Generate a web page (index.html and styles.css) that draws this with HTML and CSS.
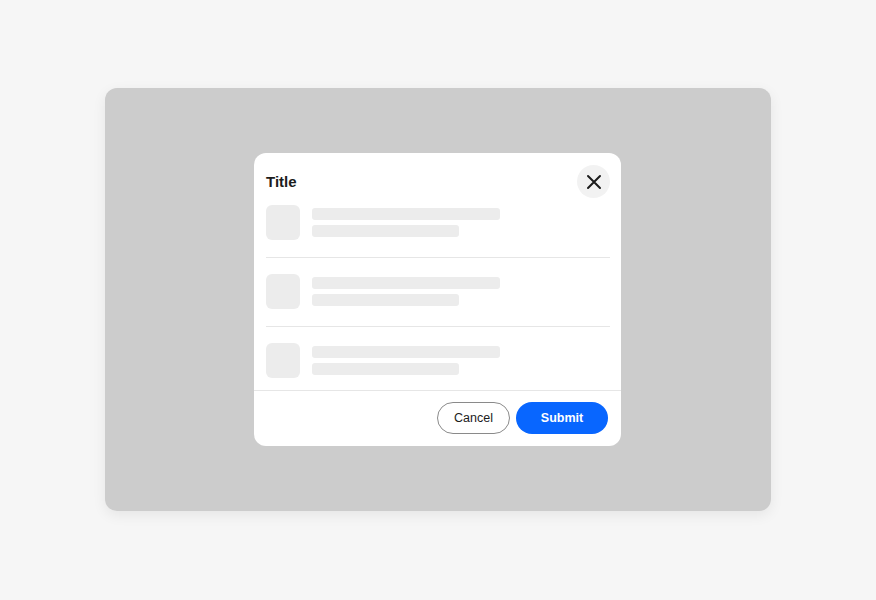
FILE: index.html
```html
<!DOCTYPE html>
<html lang="en">
<head>
<meta charset="utf-8">
<title>Dialog</title>
<link rel="stylesheet" href="styles.css">
</head>
<body>
<div class="stage">
  <div class="backdrop">
    <div class="modal" role="dialog" aria-label="Title">
      <div class="modal-header">
        <h2 class="modal-title">Title</h2>
        <button class="close-btn" aria-label="Close">
          <svg width="16" height="16" viewBox="0 0 16 16" aria-hidden="true">
            <path d="M2 2 L14 14 M14 2 L2 14" stroke="#1c1c1c" stroke-width="2" stroke-linecap="round" fill="none"/>
          </svg>
        </button>
      </div>
      <div class="modal-body">
        <div class="row">
          <div class="thumb"></div>
          <div class="lines"><div class="line line-long"></div><div class="line line-short"></div></div>
        </div>
        <div class="row">
          <div class="thumb"></div>
          <div class="lines"><div class="line line-long"></div><div class="line line-short"></div></div>
        </div>
        <div class="row">
          <div class="thumb"></div>
          <div class="lines"><div class="line line-long"></div><div class="line line-short"></div></div>
        </div>
      </div>
      <div class="modal-footer">
        <button class="btn btn-secondary">Cancel</button>
        <button class="btn btn-primary">Submit</button>
      </div>
    </div>
  </div>
</div>
</body>
</html>
```
FILE: styles.css
```css
* { box-sizing: border-box; }
html, body { margin: 0; padding: 0; }
body {
  background: #f6f6f6;
  font-family: "Liberation Sans", Arial, sans-serif;
  color: #1c1c1c;
}
.stage {
  width: 876px;
  height: 600px;
  display: flex;
  align-items: center;
  justify-content: center;
}
.backdrop {
  width: 666px;
  height: 423px;
  margin-top: -1px;
  background: #cccccc;
  border-radius: 12px;
  box-shadow: 0 4px 14px rgba(0, 0, 0, 0.07);
  display: flex;
  align-items: center;
  justify-content: center;
}
.modal {
  width: 367px;
  height: 293px;
  margin-right: 1px;
  background: #ffffff;
  border-radius: 12px;
  display: flex;
  flex-direction: column;
  overflow: hidden;
}
.modal-header {
  display: flex;
  align-items: center;
  justify-content: space-between;
  padding: 12px 11px 0 12px;
  height: 45px;
  flex: none;
}
.modal-title {
  margin: 0;
  font-size: 15px;
  font-weight: 700;
  line-height: 18px;
  color: #1c1c1c;
}
.close-btn {
  width: 33px;
  height: 33px;
  border-radius: 50%;
  border: none;
  background: #f2f2f2;
  padding: 0;
  display: flex;
  align-items: center;
  justify-content: center;
  cursor: pointer;
}
.modal-body {
  flex: 1;
  overflow: hidden;
  padding: 7px 11px 0 12px;
}
.row {
  display: flex;
  align-items: center;
  gap: 12px;
  padding: 16px 0 17px;
  border-bottom: 1px solid #e6e6e6;
}
.row:first-child { padding-top: 0; }
.row:last-child { border-bottom: none; }
.thumb {
  width: 34px;
  height: 35px;
  border-radius: 6px;
  background: #ececec;
  flex: none;
}
.lines {
  display: flex;
  flex-direction: column;
  gap: 5px;
}
.line {
  height: 12px;
  border-radius: 3px;
  background: #ececec;
}
.line-long { width: 188px; }
.line-short { width: 147px; }
.modal-footer {
  flex: none;
  border-top: 1px solid #e6e6e6;
  display: flex;
  justify-content: flex-end;
  gap: 6px;
  padding: 11px 13px 12px;
}
.btn {
  height: 32px;
  border-radius: 16px;
  font-family: "Liberation Sans", Arial, sans-serif;
  font-size: 12.5px;
  cursor: pointer;
}
.btn-secondary {
  width: 73px;
  background: #ffffff;
  border: 1px solid #8a8a8a;
  color: #1c1c1c;
}
.btn-primary {
  width: 92px;
  background: #0866ff;
  border: none;
  color: #ffffff;
  font-weight: 700;
}
```
